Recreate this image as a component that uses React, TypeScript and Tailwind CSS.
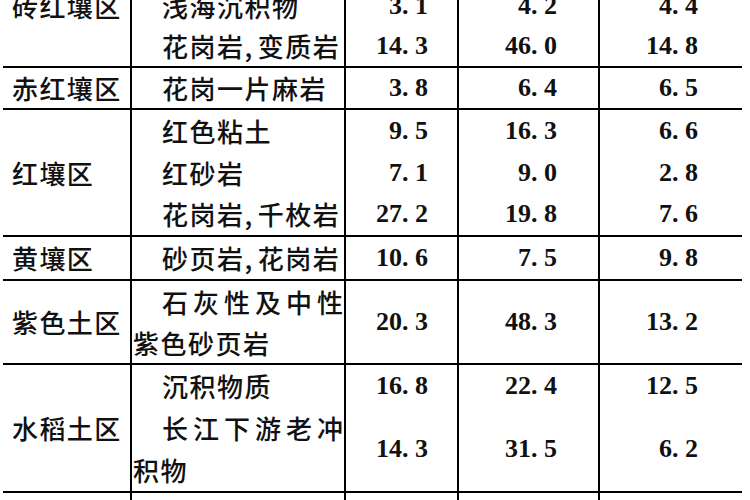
import React from "react";

const CJK = "font-['Noto_Sans_CJK_SC','Noto_Sans_CJK_JP',sans-serif] font-medium text-[26px] leading-none text-[#111]";
const NUM = "font-['Liberation_Serif',serif] font-bold text-[26px] leading-none text-[#111] whitespace-pre";

function Num({ v }: { v: string }) {
  return <span className={NUM}>{v.replace(".", ". ")}</span>;
}

function Label({ text }: { text: string }) {
  return (
    <div className="w-[129px] shrink-0 border-r-2 border-black flex items-center pl-[9px]">
      <span className={`${CJK} tracking-[1.4px]`}>{text}</span>
    </div>
  );
}

function Lines({ lines }: { lines: React.ReactNode[] }) {
  return (
    <div className="w-[214px] shrink-0 border-r-2 border-black flex flex-col">
      {lines.map((l, i) => (
        <div key={i} className="flex-1 flex items-center">
          {l}
        </div>
      ))}
    </div>
  );
}

function T({ children, wide, flush }: { children: React.ReactNode; wide?: boolean; flush?: boolean }) {
  return (
    <span className={`${CJK} ${wide ? "tracking-[5px]" : "tracking-[1.5px]"} ${flush ? "pl-[1px]" : "pl-[30px]"} whitespace-nowrap`}>
      {children}
    </span>
  );
}

const Comma = () => <span className="mr-[4px]">,</span>;

type Cell = (string | null)[];

function NumCol({ vals, w, pr, last }: { vals: Cell; w: string; pr: string; last?: boolean }) {
  return (
    <div className={`${w} ${last ? "" : "border-r-2 border-black"} flex flex-col`}>
      {vals.map((v, i) => (
        <div key={i} className={`flex-1 flex items-center justify-end ${pr}`}>
          {v ? <Num v={v} /> : null}
        </div>
      ))}
    </div>
  );
}

function NumCols({ a, b, c }: { a: Cell; b: Cell; c: Cell }) {
  return (
    <>
      <NumCol vals={a} w="w-[113px] shrink-0" pr="pr-[29px]" />
      <NumCol vals={b} w="w-[141px] shrink-0" pr="pr-[41px]" />
      <NumCol vals={c} w="flex-1" pr="pr-[44px]" last />
    </>
  );
}

export default function App() {
  return (
    <div className="w-[750px] h-[500px] overflow-hidden bg-white">
      <div className="w-[739px] ml-[3px] -mt-[14px] flex flex-col">
        {/* 砖红壤区 */}
        <div className="flex h-[82px] border-b-2 border-black">
          <div className="w-[129px] shrink-0 border-r-2 border-black flex flex-col pl-[9px]">
            <div className="h-[40px] flex items-center">
              <span className={`${CJK} tracking-[1.4px]`}>砖红壤区</span>
            </div>
          </div>
          <Lines
            lines={[
              <T>浅海沉积物</T>,
              <T>
                花岗岩<Comma />变质岩
              </T>,
            ]}
          />
          <NumCols a={["3.1", "14.3"]} b={["4.2", "46.0"]} c={["4.4", "14.8"]} />
        </div>

        {/* 赤红壤区 */}
        <div className="flex h-[42px] border-b-2 border-black">
          <Label text="赤红壤区" />
          <Lines lines={[<T>花岗一片麻岩</T>]} />
          <NumCols a={["3.8"]} b={["6.4"]} c={["6.5"]} />
        </div>

        {/* 红壤区 */}
        <div className="flex h-[127px] border-b-2 border-black">
          <Label text="红壤区" />
          <Lines
            lines={[
              <T>红色粘土</T>,
              <T>红砂岩</T>,
              <T>
                花岗岩<Comma />千枚岩
              </T>,
            ]}
          />
          <NumCols a={["9.5", "7.1", "27.2"]} b={["16.3", "9.0", "19.8"]} c={["6.6", "2.8", "7.6"]} />
        </div>

        {/* 黄壤区 */}
        <div className="flex h-[44px] border-b-2 border-black">
          <Label text="黄壤区" />
          <Lines
            lines={[
              <T>
                砂页岩<Comma />花岗岩
              </T>,
            ]}
          />
          <NumCols a={["10.6"]} b={["7.5"]} c={["9.8"]} />
        </div>

        {/* 紫色土区 */}
        <div className="flex h-[84px] border-b-2 border-black">
          <Label text="紫色土区" />
          <Lines
            lines={[
              <T wide>石灰性及中性</T>,
              <T flush>紫色砂页岩</T>,
            ]}
          />
          <NumCols a={["20.3"]} b={["48.3"]} c={["13.2"]} />
        </div>

        {/* 水稻土区 */}
        <div className="flex h-[128px] border-b-2 border-black">
          <Label text="水稻土区" />
          <Lines
            lines={[
              <T>沉积物质</T>,
              <T wide>长江下游老冲</T>,
              <T flush>积物</T>,
            ]}
          />
          <div className="w-[113px] shrink-0 border-r-2 border-black flex flex-col">
            <div className="h-[42px] flex items-center justify-end pr-[29px]">
              <Num v="16.8" />
            </div>
            <div className="flex-1 flex items-center justify-end pr-[29px]">
              <Num v="14.3" />
            </div>
          </div>
          <div className="w-[141px] shrink-0 border-r-2 border-black flex flex-col">
            <div className="h-[42px] flex items-center justify-end pr-[41px]">
              <Num v="22.4" />
            </div>
            <div className="flex-1 flex items-center justify-end pr-[41px]">
              <Num v="31.5" />
            </div>
          </div>
          <div className="flex-1 flex flex-col">
            <div className="h-[42px] flex items-center justify-end pr-[44px]">
              <Num v="12.5" />
            </div>
            <div className="flex-1 flex items-center justify-end pr-[44px]">
              <Num v="6.2" />
            </div>
          </div>
        </div>

        {/* continuation */}
        <div className="flex h-[40px]">
          <div className="w-[129px] shrink-0 border-r-2 border-black" />
          <div className="w-[214px] shrink-0 border-r-2 border-black" />
          <div className="w-[113px] shrink-0 border-r-2 border-black" />
          <div className="w-[141px] shrink-0 border-r-2 border-black" />
          <div className="flex-1" />
        </div>
      </div>
    </div>
  );
}
